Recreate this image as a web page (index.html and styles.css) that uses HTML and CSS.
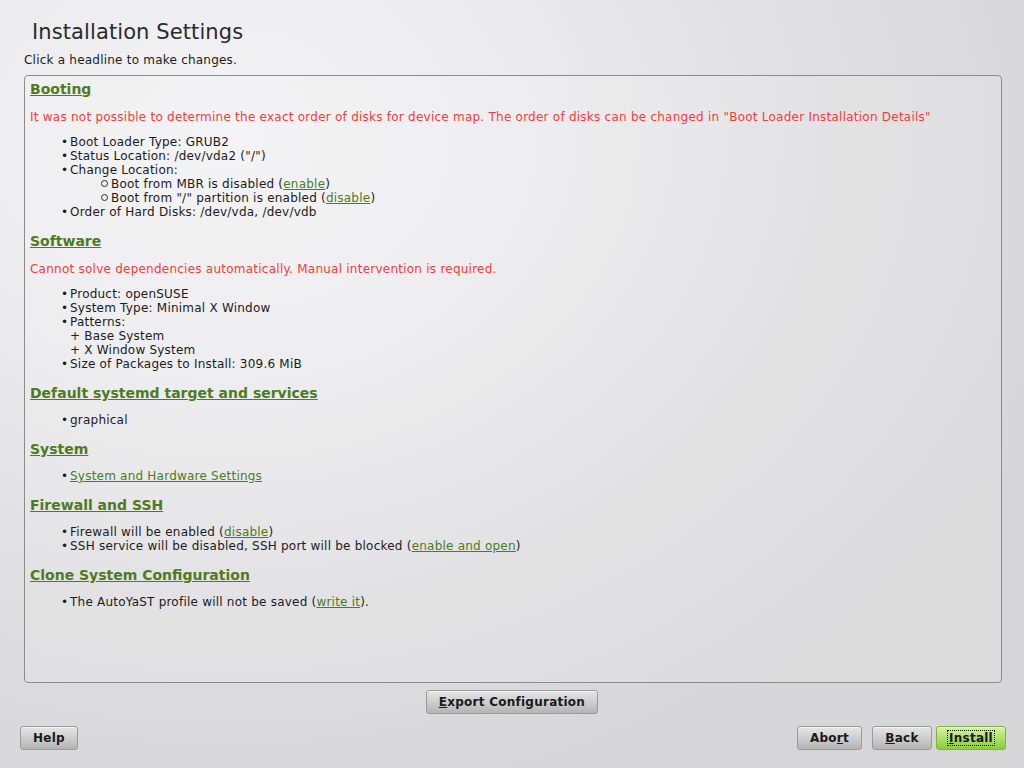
FILE: index.html
```html
<!DOCTYPE html>
<html lang="en">
<head>
<meta charset="utf-8">
<title>Installation Settings</title>
<link rel="stylesheet" href="styles.css">
</head>
<body>
<div class="page">
  <h1 class="title">Installation Settings</h1>
  <p class="subtitle">Click a headline to make changes.</p>
  <div class="box">
    <h2 class="head"><a href="#">Booting</a></h2>
    <p class="warn">It was not possible to determine the exact order of disks for device map. The order of disks can be changed in "Boot Loader Installation Details"</p>
    <ul class="list">
      <li>Boot Loader Type: GRUB2</li>
      <li>Status Location: /dev/vda2 ("/")</li>
      <li>Change Location:
        <ul class="sub">
          <li>Boot from MBR is disabled (<a href="#">enable</a>)</li>
          <li>Boot from "/" partition is enabled (<a href="#">disable</a>)</li>
        </ul>
      </li>
      <li>Order of Hard Disks: /dev/vda, /dev/vdb</li>
    </ul>

    <h2 class="head"><a href="#">Software</a></h2>
    <p class="warn">Cannot solve dependencies automatically. Manual intervention is required.</p>
    <ul class="list">
      <li>Product: openSUSE</li>
      <li>System Type: Minimal X Window</li>
      <li>Patterns:</li>
      <li class="plain">+ Base System</li>
      <li class="plain">+ X Window System</li>
      <li>Size of Packages to Install: 309.6 MiB</li>
    </ul>

    <h2 class="head"><a href="#">Default systemd target and services</a></h2>
    <ul class="list">
      <li>graphical</li>
    </ul>

    <h2 class="head"><a href="#">System</a></h2>
    <ul class="list">
      <li><a href="#">System and Hardware Settings</a></li>
    </ul>

    <h2 class="head"><a href="#">Firewall and SSH</a></h2>
    <ul class="list">
      <li>Firewall will be enabled (<a href="#">disable</a>)</li>
      <li>SSH service will be disabled, SSH port will be blocked (<a href="#">enable and open</a>)</li>
    </ul>

    <h2 class="head"><a href="#">Clone System Configuration</a></h2>
    <ul class="list">
      <li>The AutoYaST profile will not be saved (<a href="#">write it</a>).</li>
    </ul>
  </div>
  <div class="export-row">
    <button class="btn export"><u>E</u>xport Configuration</button>
  </div>
  <div class="bottom-row">
    <button class="btn help">Help</button>
    <div class="right">
      <button class="btn abort">Abo<u>r</u>t</button>
      <button class="btn back"><u>B</u>ack</button>
      <button class="btn install"><span class="focus"><u>I</u>nstall</span></button>
    </div>
  </div>
</div>
</body>
</html>
```
FILE: styles.css
```css
* { box-sizing: border-box; }
html, body {
  margin: 0;
  padding: 0;
  width: 1024px;
  height: 768px;
  overflow: hidden;
}
body {
  font-family: "DejaVu Sans", sans-serif;
  font-size: 12px;
  color: #1c1c1c;
  background: radial-gradient(ellipse 900px 700px at 22% 18%, #f3f2f4 0%, #ebeaec 35%, #dedee0 70%, #d6d6d8 100%);
}
.page {
  height: 768px;
  display: flex;
  flex-direction: column;
  padding-bottom: 18px;
}
.title {
  margin: 18px 0 0 32px;
  font-size: 21px;
  line-height: 28px;
  font-weight: normal;
  letter-spacing: 0.1px;
  color: #2b2b2b;
}
.subtitle {
  margin: 7px 0 0 24px;
  line-height: 14px;
  font-size: 12px;
  letter-spacing: 0.22px;
}
.box {
  flex: 1;
  margin: 8px 22px 0 24px;
  border: 1px solid #8c8c8c;
  border-radius: 4px;
  padding: 4px 5px 0 5px;
  background: rgba(255, 255, 255, 0.12);
  overflow: hidden;
}
.head {
  margin: 0 0 11px 0;
  font-size: 14px;
  line-height: 18px;
  font-weight: bold;
}
.head a {
  color: #4e7b1d;
  text-decoration: underline;
}
.warn {
  margin: 12px 0 11px 0;
  line-height: 14px;
  letter-spacing: 0.24px;
  color: #ee4040;
}
.list {
  list-style: none;
  margin: 0 0 13px 0;
  padding: 0 0 0 40px;
  line-height: 14px;
  letter-spacing: 0.22px;
}
.list li {
  line-height: 14px;
}
.list li::before {
  content: "\2022";
  display: inline-block;
  width: 9px;
  margin-left: -9px;
  letter-spacing: 0;
}
.list li.plain::before { content: none; }
.sub {
  list-style: none;
  margin: 0;
  padding: 0 0 0 40px;
}
.sub li::before {
  content: "" !important;
  display: inline-block;
  width: 5px !important;
  height: 5px;
  margin-left: -9px !important;
  margin-right: 3px;
  border: 1px solid #2a2a2a;
  border-radius: 50%;
  vertical-align: 1px;
}
a {
  color: #4a7d1b;
  text-decoration: underline;
}
.export-row {
  margin-top: 7px;
  height: 24px;
  display: flex;
  justify-content: center;
}
.bottom-row {
  margin-top: 12px;
  height: 24px;
  display: flex;
  justify-content: space-between;
  padding: 0 18px 0 20px;
}
.right {
  display: flex;
}
.btn {
  height: 24px;
  font-family: "DejaVu Sans", sans-serif;
  font-size: 12px;
  font-weight: bold;
  letter-spacing: 0.25px;
  color: #1a1a1a;
  border: 1px solid #999b99;
  border-radius: 3px;
  background: linear-gradient(#e6e6e6 0%, #d0d0d0 45%, #b4b4b4 100%);
  box-shadow: inset 0 1px 0 rgba(255,255,255,0.6);
  padding: 0;
  margin: 0;
}
.btn u { text-decoration: underline; }
.export { width: 172px; }
.help { width: 58px; }
.abort { width: 65px; }
.back { width: 60px; margin-left: 10px; }
.install {
  width: 70px;
  margin-left: 4px;
  border-color: #7fb244;
  background: linear-gradient(#d8f2a8 0%, #b0e06a 50%, #8ccc3c 100%);
}
.install .focus {
  border: 1px dotted #111;
  padding: 0 1px;
}
```
